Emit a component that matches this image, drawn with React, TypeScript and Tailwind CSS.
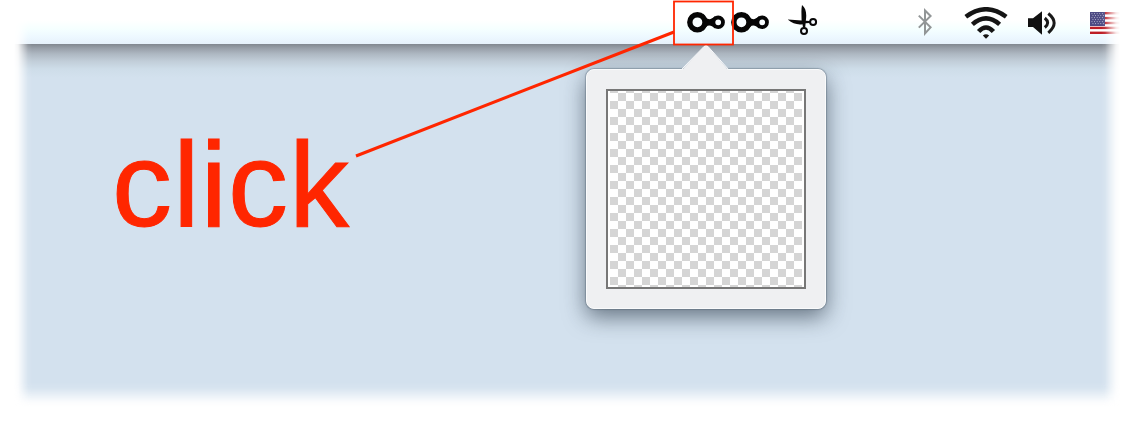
import React from "react";

const fade =
  "linear-gradient(to right, transparent 14px, rgba(0,0,0,.1) 18px, rgba(0,0,0,.5) 23px, rgba(0,0,0,.9) 28px, black 32px, black 1101px, rgba(0,0,0,.9) 1105px, rgba(0,0,0,.5) 1110px, rgba(0,0,0,.1) 1116px, transparent 1120px)";

function Loop() {
  return (
    <svg width="38" height="22" viewBox="0 0 38 22">
      <path d="M16 2.5 C19.5 9 23 10 28 5 L28 17.6 C23 12.6 19.5 13.6 16 20.1Z" fill="#050505" />
      <circle cx="10.4" cy="11.3" r="7.6" fill="#f8fdff" stroke="#050505" strokeWidth="5.4" />
      <circle cx="31.2" cy="11.3" r="4.8" fill="#f8fdff" stroke="#050505" strokeWidth="3.8" />
    </svg>
  );
}

function Scissors() {
  return (
    <svg width="31" height="31" viewBox="0 0 31 31">
      <path d="M14 0 C17.8 3 19 8 17.8 15.8 L22 16 V18 L17.6 18.2 L17.2 22.5 H15 L14.5 19.3 C9 20 4 18.5 -.4 14.5 L13.6 15.6 C13.6 10 13 5 14 0Z" fill="#080808" />
      <circle cx="25.1" cy="17" r="3" fill="#f4faff" stroke="#080808" strokeWidth="2" />
      <circle cx="16" cy="26" r="3" fill="#f4faff" stroke="#080808" strokeWidth="2" />
    </svg>
  );
}

function Bluetooth() {
  return (
    <svg width="14" height="28" viewBox="0 0 14 28">
      <path d="M.8 7.6 12.6 19.4 7 25.5 V2.5 L12.6 8 .8 19.6" fill="none" stroke="#929697" strokeWidth="2" />
    </svg>
  );
}

function Wifi() {
  return (
    <svg width="44" height="32" viewBox="0 0 44 32">
      <g fill="none" stroke="#151515" strokeWidth="4.5">
        <path d="M1.8 9.8 Q22 -5.3 42.2 9.8" />
        <path d="M8.4 17.4 Q22 5.4 35.6 17.4" />
        <path d="M14.6 24.6 Q22 16.4 29.4 24.6" />
      </g>
      <path d="M18.8 28.6 Q22 26 25.2 28.6 L22 31.8Z" fill="#151515" />
    </svg>
  );
}

function Volume() {
  return (
    <svg width="28" height="24" viewBox="0 0 28 24">
      <path d="M0 7.3 H5 L14 0.3 V23.7 L5 16 H0Z" fill="#111" />
      <path d="M16.8 7 Q22.5 11.8 16.8 16.5 M20.3 2.5 Q32 12 20.3 21.8" fill="none" stroke="#191919" strokeWidth="3" />
    </svg>
  );
}

function Flag() {
  return (
    <svg width="32" height="22" viewBox="0 0 32 22">
      <rect width="32" height="22" fill="#fff" />
      {[0, 1, 2, 3, 4].map((i) => (
        <rect key={i} y={i * 4.9} width="32" height="2.4" fill="#bd1d25" />
      ))}
      <rect width="15" height="14" fill="#4c4a83" />
      {[0, 1, 2, 3, 4, 5].map((r) =>
        [0, 1, 2, 3, 4].map((c) => (
          <rect key={`${r}-${c}`} x={1.5 + c * 2.6 + (r % 2)} y={1.2 + r * 2} width="0.9" height="0.9" fill="#c9c8dc" />
        ))
      )}
    </svg>
  );
}

export default function App() {
  return (
    <main className="relative h-[430px] w-[1140px] overflow-hidden bg-white">
      <div className="flex h-[430px] flex-col" style={{ maskImage: fade }}>
        <header className="flex h-11 shrink-0 bg-[linear-gradient(to_bottom,#fff_0px,#fff_20px,#f5ffff_29px,#edf8ff_37px,#e6f1fb_44px)]">
          <div className="ml-[687px] mt-[11px] w-[44px]"><Loop /></div>
          <div className="mt-[11px] w-[57px]"><Loop /></div>
          <div className="mt-[5px] w-[130px]"><Scissors /></div>
          <div className="mt-[8px] w-[46px]"><Bluetooth /></div>
          <div className="mt-[7px] w-[64px]"><Wifi /></div>
          <div className="mt-[11px] w-[62px]"><Volume /></div>
          <div className="mt-[12px]"><Flag /></div>
        </header>
        <section className="h-[364px] bg-[linear-gradient(to_bottom,#81878f_0px,#979ea7_4px,#aeb8c2_10px,#c1cdd8_17px,#cedde9_25px,#d3e1ee_34px)] pl-[112px] pt-[70px] [mask-image:linear-gradient(to_bottom,black_338px,rgba(0,0,0,.9)_344px,rgba(0,0,0,.5)_351px,rgba(0,0,0,.1)_358px,transparent_363px)]">
          <h1 className="font-['Liberation_Sans',sans-serif] text-[120px] font-normal leading-[141px] tracking-[0.9px] text-[#ff2600] [-webkit-text-stroke:1px_#ff2600]">click</h1>
        </section>
      </div>
      <div className="absolute left-[586px] top-[69px] size-[240px] rounded-[8px] border border-[#fafbfc] bg-[#eff0f2] p-[19px] shadow-[0_0_1px_1px_rgba(80,95,110,.4),0_8px_22px_rgba(30,45,60,.6)]">
        <div className="size-[200px] border-2 border-[#777] bg-white px-[2px]">
          <div className="h-full bg-[conic-gradient(#d5d5d5_25%,#fff_0_50%,#d5d5d5_0_75%,#fff_0)] bg-[length:16px_16px] bg-[position:0px_2px]" />
        </div>
      </div>
      <svg className="absolute inset-0" width="1140" height="430">
        <path d="M681.5 70.5 L704 46.5 Q706 44.5 708 46.5 L728.5 70.5Z" fill="#eff0f2" />
        <path d="M681.5 69.5 L704 46.5 Q706 44.5 708 46.5 L728.5 69.5" fill="none" stroke="#f9fafc" />
        <path d="M356 156 L674 32" stroke="#ff2600" strokeWidth="3" />
        <rect x="674" y="1.5" width="59" height="43" fill="none" stroke="#ff2600" strokeWidth="1.8" />
      </svg>
    </main>
  );
}
